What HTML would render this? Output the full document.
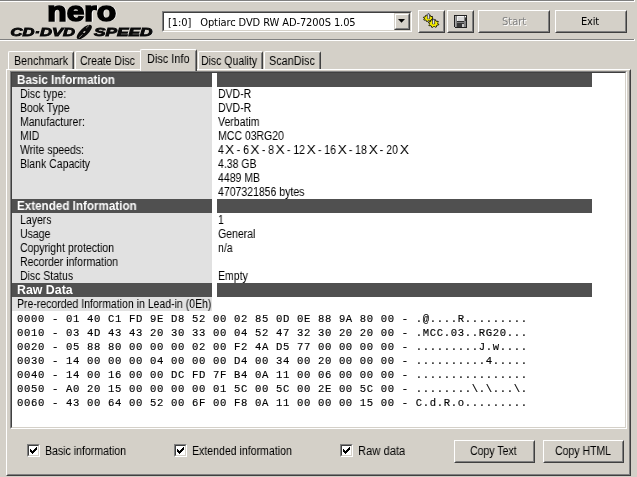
<!DOCTYPE html>
<html><head><meta charset="utf-8"><title>Nero CD-DVD Speed</title>
<style>
*{box-sizing:border-box;margin:0;padding:0}
html,body{width:637px;height:477px;overflow:hidden;background:#d4d0c8}
body{position:relative;font-family:"Liberation Sans",sans-serif;color:#000}
.a{position:absolute}
.t,.tb,.th,.m,svg{will-change:transform}
.t{position:absolute;white-space:pre;font-size:12.5px;line-height:14px;height:14px;transform-origin:0 0;transform:scaleX(0.84)}
.tb{position:absolute;white-space:pre;font-size:12px;font-weight:bold;line-height:14px;height:14px;color:#fff;transform-origin:0 0;transform:scaleX(0.97)}
.th{position:absolute;white-space:pre;font-family:"DejaVu Sans Condensed","Liberation Sans",sans-serif;font-size:11px;line-height:14px;height:14px;transform-origin:0 0}
.m{position:absolute;white-space:pre;font-family:"Liberation Mono",monospace;font-size:10.6px;line-height:14px;height:14px;left:17.3px;letter-spacing:0.64px;margin-top:1px;-webkit-text-stroke:0.15px #000}
.btn{position:absolute;background:#d4d0c8;border:1px solid;border-color:#fff #404040 #404040 #fff;}
.btn:before{content:"";position:absolute;left:0;top:0;right:0;bottom:0;border:1px solid;border-color:#d4d0c8 #808080 #808080 #d4d0c8}
.sunk{position:absolute;border:1px solid;border-color:#808080 #fff #fff #808080}
.sunk:before{content:"";position:absolute;left:0;top:0;right:0;bottom:0;border:1px solid;border-color:#404040 #d4d0c8 #d4d0c8 #404040}
.tab{position:absolute;background:#d4d0c8;border-top:1px solid #fff;border-left:1px solid #fff;border-right:1px solid #404040;border-radius:2px 2px 0 0}
.tab:before{content:"";position:absolute;right:0;top:1px;bottom:0;width:1px;background:#808080}
.sb{border-color:#d4d0c8 #404040 #404040 #d4d0c8}
.sb:before{border-color:#fff #808080 #808080 #fff}
.nr{border-right:none;border-radius:2px 0 0 0}
.nr:before{display:none}
.x{display:inline-block;transform:scaleX(1.3);transform-origin:60% 50%}
.hd{position:absolute;background:#505050;height:14px}
.lb{position:absolute;background:#e1e1e1;left:12px;width:200px;height:14px}
.cb{position:absolute;width:13px;height:13px;background:#fff;border:1px solid;border-color:#808080 #fff #fff #808080}
.cb:before{content:"";position:absolute;left:0;top:0;right:0;bottom:0;border:1px solid;border-color:#404040 #d4d0c8 #d4d0c8 #404040}
</style></head>
<body>
<div class="a" style="left:0;top:0;width:634px;height:1px;background:#808080"></div>
<div class="a" style="left:0;top:1px;width:635px;height:1px;background:#fff"></div>
<div class="a" style="left:634px;top:0;width:1px;height:2px;background:#fff"></div>
<div class="a" style="left:0;top:39px;width:634px;height:1px;background:#808080"></div>
<div class="a" style="left:0;top:40px;width:635px;height:1px;background:#fff"></div>
<div class="a" style="left:634px;top:39px;width:1px;height:2px;background:#fff"></div>
<svg class="a" style="left:0;top:2px" width="160" height="37" viewBox="0 0 160 37">
<text x="47.2" y="18.5" font-family="Liberation Sans, sans-serif" font-weight="bold" font-size="28" textLength="69" lengthAdjust="spacingAndGlyphs" fill="#fff" stroke="#fff" stroke-width="1.6" transform="translate(0.8,0.8)">nero</text>
<text x="47.2" y="18.5" font-family="Liberation Sans, sans-serif" font-weight="bold" font-size="28" textLength="69" lengthAdjust="spacingAndGlyphs" fill="#000" stroke="#000" stroke-width="1.6">nero</text>
<g font-family="Liberation Sans, sans-serif" font-style="italic" font-weight="bold" font-size="11.2" fill="#eee" stroke="#eee" stroke-width="0.5" transform="translate(0.7,0.7)">
<text x="10.5" y="33.8" textLength="64.5" lengthAdjust="spacingAndGlyphs">CD·DVD</text>
<text x="94" y="33.8" textLength="58.5" lengthAdjust="spacingAndGlyphs">SPEED</text>
</g>
<g font-family="Liberation Sans, sans-serif" font-style="italic" font-weight="bold" font-size="11.2" fill="#0a0a0a" stroke="#0a0a0a" stroke-width="0.85">
<text x="10.5" y="33.8" textLength="64.5" lengthAdjust="spacingAndGlyphs">CD·DVD</text>
<text x="94" y="33.8" textLength="58.5" lengthAdjust="spacingAndGlyphs">SPEED</text>
</g>
<g transform="translate(84.3,30) rotate(-43)"><ellipse cx="0" cy="0" rx="9.7" ry="3.9" fill="#0a0a0a"/><ellipse cx="0" cy="0" rx="1.3" ry="0.8" fill="#d8d4cc"/><path d="M-8 0.6h5M4 -1.6h4" stroke="#c8c4bc" stroke-width="0.6"/></g>
</svg>
<div class="sunk" style="left:162px;top:11px;width:250px;height:21px;background:#fff"></div>
<div class="th" style="left:168.4px;top:16px;letter-spacing:-0.1px">[1:0]<span style="margin-left:3px">  </span>Optiarc DVD RW AD-7200S 1.05</div>
<div class="btn sb" style="left:394px;top:13px;width:16px;height:17px"></div>
<svg class="a" style="left:398px;top:19px" width="7" height="4" viewBox="0 0 7 4"><path d="M0 0h7L3.5 3.8z" fill="#000"/></svg>
<div class="btn" style="left:418px;top:10px;width:27px;height:23px"></div>
<div class="btn" style="left:447px;top:10px;width:27px;height:23px"></div>
<svg class="a" style="left:418px;top:10px" width="27" height="23" viewBox="0 0 27 23">
<path d="M15.20 8.96 L14.91 9.57 L13.45 9.70 L12.98 10.08 L13.06 11.05 L12.20 11.35 L11.03 10.76 L10.29 10.81 L9.31 11.53 L8.37 11.34 L8.18 10.38 L7.60 10.07 L6.13 10.12 L5.67 9.55 L6.57 8.78 L6.50 8.29 L5.40 7.64 L5.69 7.03 L7.15 6.90 L7.62 6.52 L7.54 5.55 L8.40 5.25 L9.57 5.84 L10.31 5.79 L11.29 5.07 L12.23 5.26 L12.42 6.22 L13.00 6.53 L14.47 6.48 L14.93 7.05 L14.03 7.82 L14.10 8.31Z" fill="#f4ec00" stroke="#141400" stroke-width="0.95" stroke-linejoin="round"/>
<path d="M20.79 14.29 L20.49 15.04 L18.94 15.20 L18.44 15.66 L18.53 16.83 L17.61 17.20 L16.37 16.48 L15.59 16.54 L14.55 17.42 L13.55 17.19 L13.35 16.02 L12.74 15.64 L11.18 15.71 L10.70 15.02 L11.65 14.08 L11.57 13.49 L10.41 12.71 L10.71 11.96 L12.26 11.80 L12.76 11.34 L12.67 10.17 L13.59 9.80 L14.83 10.52 L15.61 10.46 L16.65 9.58 L17.65 9.81 L17.85 10.98 L18.46 11.36 L20.02 11.29 L20.50 11.98 L19.55 12.92 L19.63 13.51Z" fill="#f4ec00" stroke="#141400" stroke-width="0.95" stroke-linejoin="round"/>
<path d="M9.4 8.8V4.4L10.5 3.1L11.6 4.4V8.8Z" fill="#8088a8" stroke="#20202a" stroke-width="0.5"/>
<path d="M10.4 4.6V8.6" stroke="#fff" stroke-width="0.8"/>
<path d="M14.5 14V10L15.6 8.8L16.7 10V14Z" fill="#8088a8" stroke="#20202a" stroke-width="0.5"/>
<path d="M15.5 10.2V13.8" stroke="#fff" stroke-width="0.8"/>
</svg>
<svg class="a" style="left:454px;top:15px" width="13" height="13" viewBox="0 0 13 13" shape-rendering="crispEdges">
<rect x="0" y="0" width="13" height="13" fill="#202020"/>
<rect x="1" y="1" width="11" height="11" fill="#808080"/>
<rect x="0" y="12" width="1" height="1" fill="#d4d0c8"/>
<rect x="1" y="1" width="1" height="11" fill="#a4a4a4"/>
<rect x="3" y="1" width="7" height="5" fill="#d8d8d8"/>
<rect x="3" y="1" width="7" height="1" fill="#f4f4f4"/>
<rect x="3" y="1" width="1" height="5" fill="#f0f0f0"/>
<rect x="3" y="6" width="7" height="1" fill="#303030"/>
<rect x="11" y="1" width="1" height="1" fill="#fff"/>
<rect x="11" y="3" width="1" height="3" fill="#303030"/>
<rect x="3" y="8" width="7" height="4" fill="#383838"/>
<rect x="8" y="9" width="2" height="3" fill="#c8c8c8"/>
</svg>
<div class="btn" style="left:478px;top:10px;width:72px;height:23px"></div>
<div class="th" style="left:502.5px;top:16px;color:#fff">Start</div>
<div class="th" style="left:501.5px;top:15px;color:#808080">Start</div>
<div class="btn" style="left:555px;top:10px;width:72px;height:23px"></div>
<div class="th" style="left:581px;top:15px;letter-spacing:-0.2px">Exit</div>
<div class="tab" style="left:8px;top:51px;width:66px;height:18px"></div>
<div class="t" style="left:14px;top:54px;transform:scaleX(0.855)">Benchmark</div>
<div class="tab nr" style="left:75px;top:51px;width:66px;height:18px"></div>
<div class="t" style="left:80px;top:54px;transform:scaleX(0.84)">Create Disc</div>
<div class="tab" style="left:198px;top:51px;width:65px;height:18px"></div>
<div class="t" style="left:201px;top:54px;transform:scaleX(0.84)">Disc Quality</div>
<div class="tab" style="left:264px;top:51px;width:57px;height:18px"></div>
<div class="t" style="left:269px;top:54px;transform:scaleX(0.87)">ScanDisc</div>
<div class="a" style="left:6px;top:69px;width:625px;height:407px;border:1px solid;border-color:#fff #404040 #404040 #fff"><div class="a" style="left:0;top:0;right:0;bottom:0;border:1px solid;border-color:#d4d0c8 #808080 #808080 #d4d0c8"></div></div>
<div class="tab" style="left:140px;top:49px;width:57px;height:22px"></div>
<div class="t" style="left:147.3px;top:52px;transform:scaleX(0.875)">Disc Info</div>
<div class="sunk" style="left:10px;top:71px;width:617px;height:358px;background:#fff"></div>
<div class="hd" style="left:12px;top:73px;width:200px"></div><div class="hd" style="left:217px;top:73px;width:375px"></div>
<div class="tb" style="left:17.3px;top:73px;transform:scaleX(0.965)">Basic Information</div>
<div class="lb" style="top:87px"></div>
<div class="t" style="left:20px;top:87px">Disc type:</div>
<div class="t" style="left:217.5px;top:87px">DVD-R</div>
<div class="lb" style="top:101px"></div>
<div class="t" style="left:20px;top:101px">Book Type</div>
<div class="t" style="left:217.5px;top:101px">DVD-R</div>
<div class="lb" style="top:115px"></div>
<div class="t" style="left:20px;top:115px">Manufacturer:</div>
<div class="t" style="left:217.5px;top:115px">Verbatim</div>
<div class="lb" style="top:129px"></div>
<div class="t" style="left:20px;top:129px">MID</div>
<div class="t" style="left:217.5px;top:129px">MCC 03RG20</div>
<div class="lb" style="top:143px"></div>
<div class="t" style="left:20px;top:143px">Write speeds:</div>
<div class="t" style="left:217.5px;top:143px">4 <span class="x">X</span> - 6 <span class="x">X</span> - 8 <span class="x">X</span> - 12 <span class="x">X</span> - 16 <span class="x">X</span> - 18 <span class="x">X</span> - 20 <span class="x">X</span></div>
<div class="lb" style="top:157px"></div>
<div class="t" style="left:20px;top:157px">Blank Capacity</div>
<div class="t" style="left:217.5px;top:157px">4.38 GB</div>
<div class="lb" style="top:171px"></div>
<div class="t" style="left:217.5px;top:171px">4489 MB</div>
<div class="lb" style="top:185px"></div>
<div class="t" style="left:217.5px;top:185px">4707321856 bytes</div>
<div class="hd" style="left:12px;top:199px;width:200px"></div><div class="hd" style="left:217px;top:199px;width:375px"></div>
<div class="tb" style="left:17.3px;top:199px;transform:scaleX(0.97)">Extended Information</div>
<div class="lb" style="top:213px"></div>
<div class="t" style="left:20px;top:213px">Layers</div>
<div class="t" style="left:217.5px;top:213px">1</div>
<div class="lb" style="top:227px"></div>
<div class="t" style="left:20px;top:227px">Usage</div>
<div class="t" style="left:217.5px;top:227px">General</div>
<div class="lb" style="top:241px"></div>
<div class="t" style="left:20px;top:241px">Copyright protection</div>
<div class="t" style="left:217.5px;top:241px">n/a</div>
<div class="lb" style="top:255px"></div>
<div class="t" style="left:20px;top:255px">Recorder information</div>
<div class="lb" style="top:269px"></div>
<div class="t" style="left:20px;top:269px">Disc Status</div>
<div class="t" style="left:217.5px;top:269px">Empty</div>
<div class="hd" style="left:12px;top:283px;width:200px"></div><div class="hd" style="left:217px;top:283px;width:375px"></div>
<div class="tb" style="left:17.3px;top:283px;transform:scaleX(1.03)">Raw Data</div>
<div class="lb" style="top:297px"></div>
<div class="t" style="left:17px;top:297px">Pre-recorded Information in Lead-in (0Eh)</div>
<div class="m" style="top:311px">0000 - 01 40 C1 FD 9E D8 52 00 02 85 0D 0E 88 9A 80 00 - .@....R.........</div>
<div class="m" style="top:325px">0010 - 03 4D 43 43 20 30 33 00 04 52 47 32 30 20 20 00 - .MCC.03..RG20...</div>
<div class="m" style="top:339px">0020 - 05 88 80 00 00 00 02 00 F2 4A D5 77 00 00 00 00 - .........J.w....</div>
<div class="m" style="top:353px">0030 - 14 00 00 00 04 00 00 00 D4 00 34 00 20 00 00 00 - ..........4.....</div>
<div class="m" style="top:367px">0040 - 14 00 16 00 00 DC FD 7F B4 0A 11 00 06 00 00 00 - ................</div>
<div class="m" style="top:381px">0050 - A0 20 15 00 00 00 00 01 5C 00 5C 00 2E 00 5C 00 - ........\.\...\.</div>
<div class="m" style="top:395px">0060 - 43 00 64 00 52 00 6F 00 F8 0A 11 00 00 00 15 00 - C.d.R.o.........</div>
<div class="cb" style="left:27px;top:444px"></div>
<svg class="a" style="left:30px;top:447px" width="7" height="7" viewBox="0 0 7 7"><path shape-rendering="crispEdges" d="M0 2h1v3h-1zM1 3h1v3h-1zM2 4h1v3h-1zM3 3h1v3h-1zM4 2h1v3h-1zM5 1h1v3h-1zM6 0h1v3h-1z" fill="#000"/></svg>
<div class="t" style="left:45px;top:444px;transform:scaleX(0.845)">Basic information</div>
<div class="cb" style="left:174px;top:444px"></div>
<svg class="a" style="left:177px;top:447px" width="7" height="7" viewBox="0 0 7 7"><path shape-rendering="crispEdges" d="M0 2h1v3h-1zM1 3h1v3h-1zM2 4h1v3h-1zM3 3h1v3h-1zM4 2h1v3h-1zM5 1h1v3h-1zM6 0h1v3h-1z" fill="#000"/></svg>
<div class="t" style="left:192px;top:444px;transform:scaleX(0.845)">Extended information</div>
<div class="cb" style="left:340px;top:444px"></div>
<svg class="a" style="left:343px;top:447px" width="7" height="7" viewBox="0 0 7 7"><path shape-rendering="crispEdges" d="M0 2h1v3h-1zM1 3h1v3h-1zM2 4h1v3h-1zM3 3h1v3h-1zM4 2h1v3h-1zM5 1h1v3h-1zM6 0h1v3h-1z" fill="#000"/></svg>
<div class="t" style="left:358.2px;top:444px;transform:scaleX(0.895)">Raw data</div>
<div class="btn" style="left:454px;top:440px;width:81px;height:23px"></div>
<div class="t" style="left:470px;top:444px">Copy Text</div>
<div class="btn" style="left:543px;top:440px;width:81px;height:23px"></div>
<div class="t" style="left:555px;top:444px">Copy HTML</div>
</body></html>
